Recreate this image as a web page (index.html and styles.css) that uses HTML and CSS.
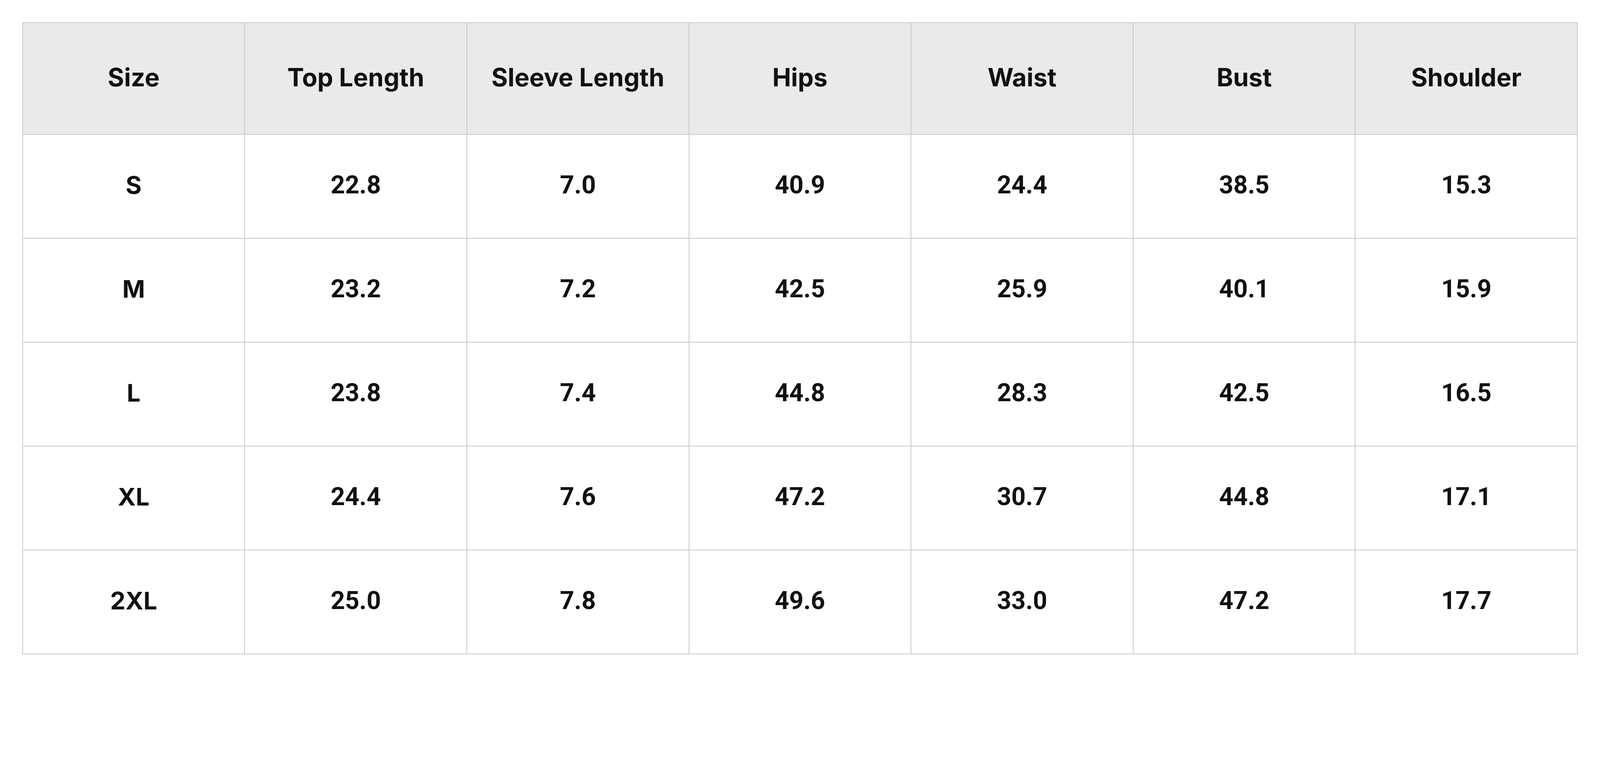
FILE: index.html
```html
<!DOCTYPE html>
<html lang="en">
<head>
<meta charset="utf-8">
<title>Size Chart</title>
<link rel="stylesheet" href="styles.css">
</head>
<body>
<main class="page">
<table class="size-table">
<thead>
<tr class="head-row">
<th>Size</th><th>Top Length</th><th>Sleeve Length</th><th>Hips</th><th>Waist</th><th>Bust</th><th>Shoulder</th>
</tr>
</thead>
<tbody>
<tr><td class="size-cell">S</td><td>22.8</td><td>7.0</td><td>40.9</td><td>24.4</td><td>38.5</td><td>15.3</td></tr>
<tr><td class="size-cell">M</td><td>23.2</td><td>7.2</td><td>42.5</td><td>25.9</td><td>40.1</td><td>15.9</td></tr>
<tr><td class="size-cell">L</td><td>23.8</td><td>7.4</td><td>44.8</td><td>28.3</td><td>42.5</td><td>16.5</td></tr>
<tr><td class="size-cell">XL</td><td>24.4</td><td>7.6</td><td>47.2</td><td>30.7</td><td>44.8</td><td>17.1</td></tr>
<tr><td class="size-cell">2XL</td><td>25.0</td><td>7.8</td><td>49.6</td><td>33.0</td><td>47.2</td><td>17.7</td></tr>
</tbody>
</table>
</main>
</body>
</html>
```

FILE: styles.css
```css
:root {
  --u: calc(100vw / 4608);
}
html, body {
  margin: 0;
  padding: 0;
  background: #ffffff;
  overflow: hidden;
}
.page {
  padding: calc(var(--u) * 64);
}
.size-table {
  width: calc(var(--u) * 4480);
  border-collapse: collapse;
  table-layout: fixed;
  font-family: Inter, "Noto Sans", sans-serif;
  font-weight: 700;
  color: #111111;
}
.size-table th,
.size-table td {
  border: calc(var(--u) * 2.4) solid #c8c8c8;
  text-align: center;
  vertical-align: middle;
  padding: 0 0 calc(var(--u) * 8) 0;
  line-height: 1;
}
.size-table th {
  background: #eaeaea;
  height: calc(var(--u) * 312);
  font-size: calc(var(--u) * 72);
  font-weight: 700;
}
.size-table td {
  height: calc(var(--u) * 289);
  font-family: Roboto, "Noto Sans", sans-serif;
  font-size: calc(var(--u) * 72);
}
.size-table td.size-cell {
  font-family: Inter, "Noto Sans", sans-serif;
  font-size: calc(var(--u) * 70);
}
```
